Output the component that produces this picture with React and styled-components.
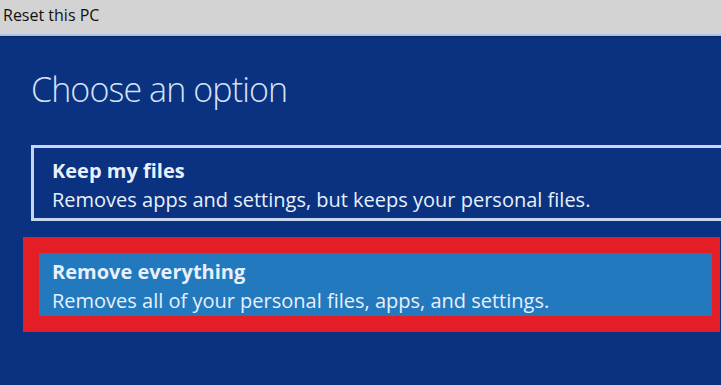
import React from "react";
import styled, { createGlobalStyle } from "styled-components";

const GlobalStyle = createGlobalStyle`
  html, body {
    margin: 0;
    padding: 0;
    background: #0a3280;
    overflow: hidden;
  }
`;

const options = [
  {
    title: "Keep my files",
    text: "Removes apps and settings, but keeps your personal files.",
    selected: false,
  },
  {
    title: "Remove everything",
    text: "Removes all of your personal files, apps, and settings.",
    selected: true,
  },
];

export default function App() {
  return (
    <Screen>
      <GlobalStyle />
      <TitleBar>Reset this PC</TitleBar>
      <Main>
        <Heading>Choose an option</Heading>
        <OptionList>
          {options.map(({ title, text, selected }) => (
            <Option key={title} $selected={selected}>
              <OptionTitle>{title}</OptionTitle>
              <OptionText>{text}</OptionText>
            </Option>
          ))}
        </OptionList>
      </Main>
    </Screen>
  );
}

const Screen = styled.div`
  width: 721px;
  height: 385px;
  overflow: hidden;
  background: #0a3280;
  font-family: "Open Sans", "Noto Sans", sans-serif;
  display: flex;
  flex-direction: column;
`;

const TitleBar = styled.div`
  height: 34px;
  line-height: 31px;
  padding-left: 3px;
  background: #d3d3d3;
  color: #111;
  font-size: 16px;
  border-bottom: 2px solid #a9c3ea;
  box-shadow: 0 1px 0 #08245e;
`;

const Main = styled.div`
  padding-top: 29px;
`;

const Heading = styled.h1`
  margin: 0 0 0 31px;
  font-size: 34px;
  line-height: 48px;
  font-weight: 300;
  letter-spacing: -0.9px;
  color: #d6e3f5;
`;

const OptionList = styled.div`
  margin-top: 32px;
  padding-left: 23px;
  display: flex;
  flex-direction: column;
  gap: 16px;
`;

const Option = styled.div`
  color: #e8f0fb;
  ${({ $selected }) =>
    $selected
      ? `
    width: 660px;
    height: 59px;
    padding: 4px 0 0 13px;
    background: #2279be;
    border: solid #e41e26;
    border-width: 16px 8px 16px 16px;
  `
      : `
    margin-left: 8px;
    width: 720px;
    height: 62px;
    padding: 8px 0 0 18px;
    border: 3px solid #c6d6f0;
    border-right: none;
  `}
`;

const OptionTitle = styled.div`
  font-size: 20px;
  line-height: 29px;
  font-weight: 700;
`;

const OptionText = styled.div`
  font-size: 20px;
  line-height: 29px;
  white-space: nowrap;
`;
